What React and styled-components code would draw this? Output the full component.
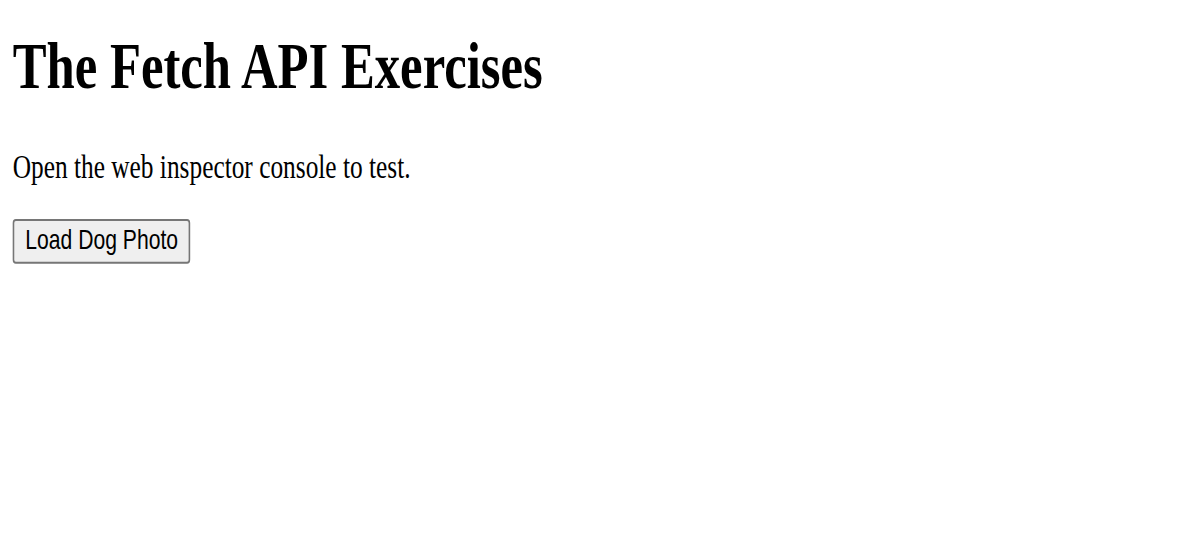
import React from 'react';
import styled, { createGlobalStyle } from 'styled-components';

const GlobalStyle = createGlobalStyle`
  html, body {
    background: #ffffff;
  }
  body {
    margin: 0;
    min-height: 100vh;
  }
`;

// the reference is a stretched capture of a plain default page,
// so the page keeps browser defaults and the wrapper carries the stretch
const Page = styled.main`
  width: max-content;
  padding: 8px;
  font-family: "Liberation Serif", "Times New Roman", serif;
  font-size: 16px;
  color: #000;
  transform-origin: 0 0;
  transform: translateY(-30px) scale(1.585, 2.04);
`;

const Title = styled.h1`
  font-size: 2em;
  font-weight: bold;
  margin: 0.67em 0;
`;

const Note = styled.p`
  margin: 1em 0;
`;

const LoadButton = styled.button`
  font-family: "Liberation Sans", Arial, sans-serif;
  font-size: 13.333px;
  color: #000;
  background: #efefef;
  border: 1px solid #767676;
  border-radius: 2px;
  padding: 2px 7px 3px;
  cursor: pointer;

  &:hover {
    background: #e5e5e5;
  }
`;

export default function App() {
  function loadDog() {
    console.log('Load Dog Photo clicked');
  }

  return <>
    <GlobalStyle />
    <Page>
      <Title>The Fetch API Exercises</Title>
      <Note>Open the web inspector console to test.</Note>
      <LoadButton onClick={loadDog}>Load Dog Photo</LoadButton>
    </Page>
  </>;
}
